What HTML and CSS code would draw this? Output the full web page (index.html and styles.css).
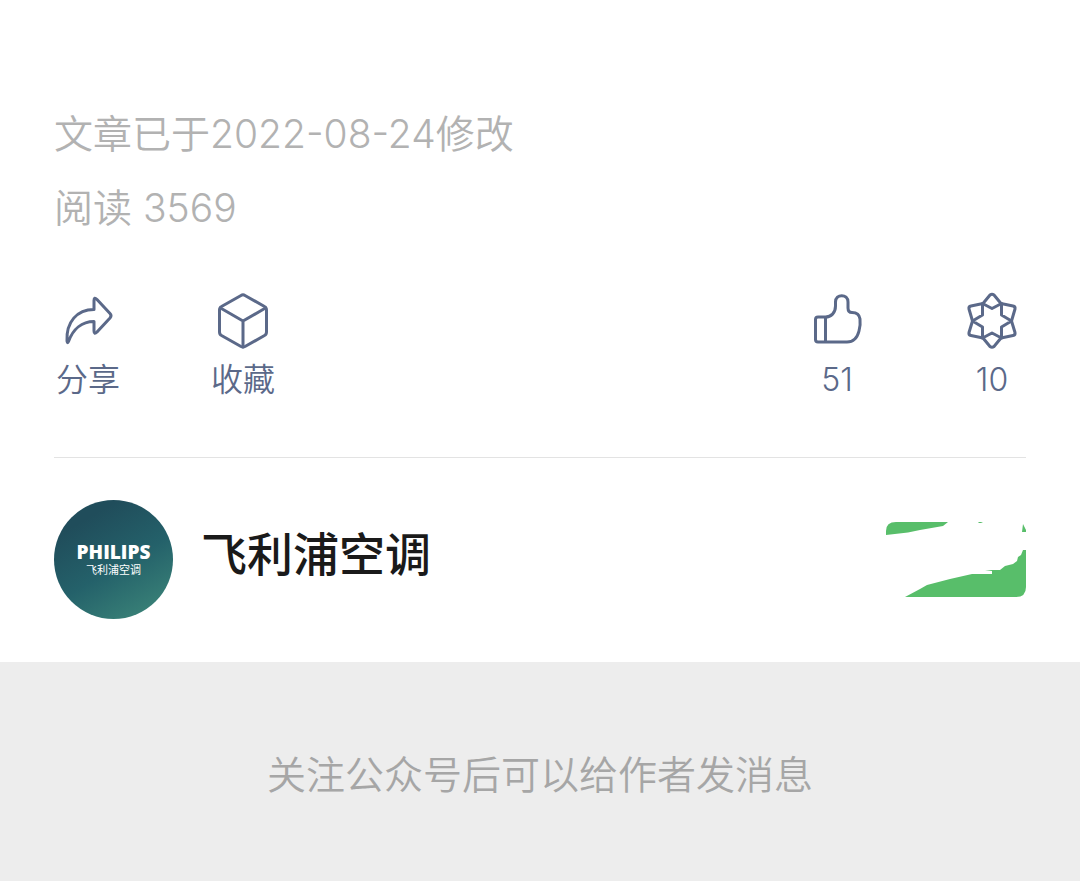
FILE: index.html
```html
<!DOCTYPE html>
<html lang="zh-CN">
<head>
  <meta charset="UTF-8" />
  <meta name="viewport" content="width=device-width, initial-scale=1.0"/>
  <title>飞利浦空调</title>
  <link rel="stylesheet" href="styles.css">
</head>
<body>
  <main>
    <section class="meta">
      <p>文章已于2022-08-24修改</p>
      <p>阅读 3569</p>
    </section>

    <section class="actions">
      <div class="group">
        <button class="action" type="button">
          <svg viewBox="0 0 60 60" aria-hidden="true">
            <path d="M36 9.500Q36 5.500 39 8.500L52 22.500Q54 24.700 52 27L39 41Q36 44 36 40V30.500C24 30.500 15 38 10.500 50.500Q9.500 53 9 50C8 31 19 18.500 36 18.500Z"/>
          </svg>
          <span>分享</span>
        </button>
        <button class="action" type="button">
          <svg viewBox="0 0 60 60" aria-hidden="true">
            <path d="M28 4.500Q30 3 32 4.500L51.500 15.500Q53.500 16.500 53.500 19V41Q53.500 43.500 51.500 44.500L32 55.500Q30 56.500 28 55.500L8.500 44.500Q6.500 43.500 6.500 41V19Q6.500 16.500 8.500 15.500Z"/>
            <path d="M7.500 17L30 30L52.500 17M30 30V56"/>
          </svg>
          <span>收藏</span>
        </button>
      </div>
      <div class="group">
        <button class="action" type="button" aria-label="赞 51">
          <svg viewBox="0 0 60 60" aria-hidden="true">
            <path d="M18.500 26H11Q8.500 26 8.500 28.500V48.500Q8.500 51 11 51H40C47 51 50.500 46 52 40C53 36 53.500 32 53 28C52.500 24 49.500 21.500 45 21.500C42 21.500 41 20 41 17V11C41 2.500 28.500 2.500 28.500 11V15C28.500 22 24 26 18.500 26V51"/>
          </svg>
          <span>51</span>
        </button>
        <button class="action" type="button" aria-label="在看 10">
          <svg viewBox="0 0 60 60" aria-hidden="true">
            <path d="M28 4Q30 2.500 32 4L39 12.500L51 15Q53.500 15.500 53 18L49.500 30L53 41.500Q53.500 44 51 44.500L39 47L32 55.500Q30 57 28 55.500L21 47L9 44.500Q6.500 44 7 41.500L10.500 30L7 18Q6.500 15.500 9 15L21 12.500Z"/>
            <path d="M20.500 12.500L30 17.500L39.500 12.500V24L49.500 30L39.500 36V47L30 42L20.500 47V36L10.500 30L20.500 24Z"/>
          </svg>
          <span>10</span>
        </button>
      </div>
    </section>

    <section class="profile">
      <div class="avatar">
        <strong>PHILIPS</strong>
        <span>飞利浦空调</span>
      </div>
      <h1>飞利浦空调</h1>
      <button class="follow" type="button" aria-label="关注">
        <svg viewBox="0 0 140 75" aria-hidden="true">
          <path d="M0 13V9Q0 0 10 0H62L57 4L34 8L22 10.500Z"/>
          <path d="M92 0H97L95 1H93ZM137 2L140 8V10H136Z"/>
          <path d="M19 75L34 67L41 63L64 57L86 52H106V49L99 48H114L119 44L127 42L131 39L132 35L135 33L137 28H140V65Q140 75 130 75Z"/>
        </svg>
      </button>
    </section>
  </main>

  <footer>关注公众号后可以给作者发消息</footer>
</body>
</html>
```
FILE: styles.css
```css
*{margin:0;padding:0;box-sizing:border-box}
body{min-height:100vh;display:flex;flex-direction:column;font-family:Inter,"Noto Sans CJK SC",sans-serif;background:#fff;color:#1a1a1a}
main{padding:97px 54px 43px}
button{border:none;background:none;font-family:inherit;cursor:pointer}
.meta{color:#b2b2b2;font-size:39px;font-weight:350;line-height:74px}
.actions{display:flex;justify-content:space-between;padding:46px 2px 55px;border-bottom:1px solid #e3e3e3}
.group{display:flex;gap:91px}
.action{width:64px;display:flex;flex-direction:column;align-items:center;gap:7px;color:#5b6989;font-size:32px;font-weight:350;line-height:44px;white-space:nowrap}
.action svg{width:60px;height:60px;fill:none;stroke:currentColor;stroke-width:3;stroke-linejoin:round;stroke-linecap:round}
.profile{display:flex;align-items:center;padding-top:42px}
.avatar{width:119px;height:119px;flex:none;display:flex;flex-direction:column;align-items:center;justify-content:center;border-radius:50%;background:linear-gradient(150deg,#204d5b 20%,#24616a 55%,#398177 90%);color:#fff}
.avatar strong{font-family:"Open Sans","Noto Sans",sans-serif;font-size:19px;font-weight:800;line-height:20px}
.avatar span{font-size:11px;line-height:16px}
h1{flex:1;padding:0 0 12px 28px;font-size:46px;font-weight:500;line-height:60px}
.follow{width:140px;height:75px;flex:none}
.follow svg{display:block;width:100%;height:100%;fill:#58be6a}
footer{flex:1;padding:76px 20px;background:#ededed;color:#a6a6a6;font-size:39px;font-weight:350;line-height:74px;text-align:center}
```
